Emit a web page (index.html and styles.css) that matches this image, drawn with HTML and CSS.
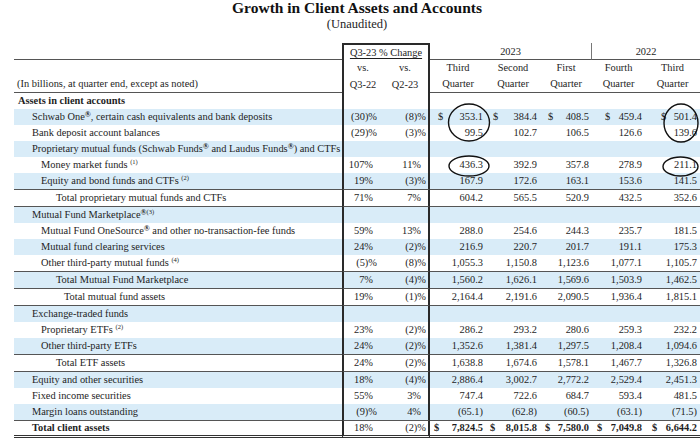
FILE: index.html
```html
<!DOCTYPE html>
<html lang="en">
<head>
<meta charset="utf-8">
<title>Growth in Client Assets and Accounts</title>
<link rel="stylesheet" href="styles.css">
</head>
<body>
<div class="page">
  <h1 class="title">Growth in Client Assets and Accounts</h1>
  <div class="subtitle">(Unaudited)</div>
  <table class="fin">
    <colgroup>
      <col class="c-label"><col class="c-p"><col class="c-p">
      <col class="c-q1"><col class="c-q2"><col class="c-q3"><col class="c-q4"><col class="c-q5">
    </colgroup>
    <thead>
      <tr class="hA">
        <th class="lbl"></th>
        <th colspan="2" class="boxtop"><span class="ul">Q3-23 % Change</span></th>
        <th colspan="3" class="yr y23">2023</th>
        <th colspan="2" class="yr">2022</th>
      </tr>
      <tr class="hB">
        <th class="lbl"></th>
        <th class="p1">vs.</th><th class="p2">vs.</th>
        <th>Third</th><th>Second</th><th>First</th><th>Fourth</th><th>Third</th>
      </tr>
      <tr class="hC">
        <th class="lbl note">(In billions, at quarter end, except as noted)</th>
        <th class="p1">Q3-22</th><th class="p2">Q2-23</th>
        <th>Quarter</th><th>Quarter</th><th>Quarter</th><th>Quarter</th><th>Quarter</th>
      </tr>
    </thead>
    <tbody>
      <tr>
        <td class="l0 strong">Assets in client accounts</td>
        <td class="p1"></td><td class="p2"></td><td></td><td></td><td></td><td></td><td></td>
      </tr>
      <tr class="b">
        <td class="l1">Schwab One<sup class="reg">®</sup>, certain cash equivalents and bank deposits</td>
        <td class="p1">(30)%</td><td class="p2">(8)%</td>
        <td class="num q1"><span class="cur">$</span>353.1</td>
        <td class="num q2"><span class="cur">$</span>384.4</td>
        <td class="num q3"><span class="cur">$</span>408.5</td>
        <td class="num q4"><span class="cur">$</span>459.4</td>
        <td class="num q5"><span class="cur">$</span>501.4</td>
      </tr>
      <tr>
        <td class="l1">Bank deposit account balances</td>
        <td class="p1">(29)%</td><td class="p2">(3)%</td>
        <td class="num">99.5</td><td class="num">102.7</td><td class="num">106.5</td><td class="num">126.6</td><td class="num">139.6</td>
      </tr>
      <tr class="b">
        <td class="l1">Proprietary mutual funds (Schwab Funds<sup class="reg">®</sup> and Laudus Funds<sup class="reg">®</sup>) and CTFs</td>
        <td class="p1"></td><td class="p2"></td><td></td><td></td><td></td><td></td><td></td>
      </tr>
      <tr>
        <td class="l2">Money market funds <sup>(1)</sup></td>
        <td class="p1 pos">107%</td><td class="p2 pos">11%</td>
        <td class="num">436.3</td><td class="num">392.9</td><td class="num">357.8</td><td class="num">278.9</td><td class="num">211.1</td>
      </tr>
      <tr class="b">
        <td class="l2">Equity and bond funds and CTFs <sup>(2)</sup></td>
        <td class="p1 pos">19%</td><td class="p2">(3)%</td>
        <td class="num">167.9</td><td class="num">172.6</td><td class="num">163.1</td><td class="num">153.6</td><td class="num">141.5</td>
      </tr>
      <tr class="sep">
        <td class="l3">Total proprietary mutual funds and CTFs</td>
        <td class="p1 pos">71%</td><td class="p2 pos">7%</td>
        <td class="num">604.2</td><td class="num">565.5</td><td class="num">520.9</td><td class="num">432.5</td><td class="num">352.6</td>
      </tr>
      <tr class="b sep">
        <td class="l1">Mutual Fund Marketplace<sup class="reg">®</sup><sup>(3)</sup></td>
        <td class="p1"></td><td class="p2"></td><td></td><td></td><td></td><td></td><td></td>
      </tr>
      <tr>
        <td class="l2">Mutual Fund OneSource<sup class="reg">®</sup> and other no-transaction-fee funds</td>
        <td class="p1 pos">59%</td><td class="p2 pos">13%</td>
        <td class="num">288.0</td><td class="num">254.6</td><td class="num">244.3</td><td class="num">235.7</td><td class="num">181.5</td>
      </tr>
      <tr class="b">
        <td class="l2">Mutual fund clearing services</td>
        <td class="p1 pos">24%</td><td class="p2">(2)%</td>
        <td class="num">216.9</td><td class="num">220.7</td><td class="num">201.7</td><td class="num">191.1</td><td class="num">175.3</td>
      </tr>
      <tr>
        <td class="l2">Other third-party mutual funds <sup>(4)</sup></td>
        <td class="p1">(5)%</td><td class="p2">(8)%</td>
        <td class="num">1,055.3</td><td class="num">1,150.8</td><td class="num">1,123.6</td><td class="num">1,077.1</td><td class="num">1,105.7</td>
      </tr>
      <tr class="b sep">
        <td class="l3">Total Mutual Fund Marketplace</td>
        <td class="p1 pos">7%</td><td class="p2">(4)%</td>
        <td class="num">1,560.2</td><td class="num">1,626.1</td><td class="num">1,569.6</td><td class="num">1,503.9</td><td class="num">1,462.5</td>
      </tr>
      <tr class="sep">
        <td class="l4">Total mutual fund assets</td>
        <td class="p1 pos">19%</td><td class="p2">(1)%</td>
        <td class="num">2,164.4</td><td class="num">2,191.6</td><td class="num">2,090.5</td><td class="num">1,936.4</td><td class="num">1,815.1</td>
      </tr>
      <tr class="b sep">
        <td class="l1">Exchange-traded funds</td>
        <td class="p1"></td><td class="p2"></td><td></td><td></td><td></td><td></td><td></td>
      </tr>
      <tr>
        <td class="l2">Proprietary ETFs <sup>(2)</sup></td>
        <td class="p1 pos">23%</td><td class="p2">(2)%</td>
        <td class="num">286.2</td><td class="num">293.2</td><td class="num">280.6</td><td class="num">259.3</td><td class="num">232.2</td>
      </tr>
      <tr class="b">
        <td class="l2">Other third-party ETFs</td>
        <td class="p1 pos">24%</td><td class="p2">(2)%</td>
        <td class="num">1,352.6</td><td class="num">1,381.4</td><td class="num">1,297.5</td><td class="num">1,208.4</td><td class="num">1,094.6</td>
      </tr>
      <tr class="sep">
        <td class="l3">Total ETF assets</td>
        <td class="p1 pos">24%</td><td class="p2">(2)%</td>
        <td class="num">1,638.8</td><td class="num">1,674.6</td><td class="num">1,578.1</td><td class="num">1,467.7</td><td class="num">1,326.8</td>
      </tr>
      <tr class="b sep">
        <td class="l1">Equity and other securities</td>
        <td class="p1 pos">18%</td><td class="p2">(4)%</td>
        <td class="num">2,886.4</td><td class="num">3,002.7</td><td class="num">2,772.2</td><td class="num">2,529.4</td><td class="num">2,451.3</td>
      </tr>
      <tr>
        <td class="l1">Fixed income securities</td>
        <td class="p1 pos">55%</td><td class="p2 pos">3%</td>
        <td class="num">747.4</td><td class="num">722.6</td><td class="num">684.7</td><td class="num">593.4</td><td class="num">481.5</td>
      </tr>
      <tr class="b">
        <td class="l1">Margin loans outstanding</td>
        <td class="p1">(9)%</td><td class="p2 pos">4%</td>
        <td class="num">(65.1)</td><td class="num">(62.8)</td><td class="num">(60.5)</td><td class="num">(63.1)</td><td class="num">(71.5)</td>
      </tr>
      <tr class="sep total">
        <td class="l1 strong">Total client assets</td>
        <td class="p1 pos">18%</td><td class="p2">(2)%</td>
        <td class="num q1 strong"><span class="cur">$</span>7,824.5</td>
        <td class="num q2 strong"><span class="cur">$</span>8,015.8</td>
        <td class="num q3 strong"><span class="cur">$</span>7,580.0</td>
        <td class="num q4 strong"><span class="cur">$</span>7,049.8</td>
        <td class="num q5 strong"><span class="cur">$</span>6,644.2</td>
      </tr>
    </tbody>
  </table>
  <svg class="marks" width="700" height="438" viewBox="0 0 700 438" aria-hidden="true">
    <ellipse cx="469" cy="122.5" rx="20.5" ry="18.5"/>
    <ellipse cx="681" cy="123" rx="17" ry="19"/>
    <ellipse cx="469" cy="166" rx="20" ry="10"/>
    <ellipse cx="680.5" cy="166.5" rx="17.5" ry="9.5"/>
  </svg>
</div>
</body>
</html>
```
FILE: styles.css
```css
html, body {
  margin: 0;
  padding: 0;
  background: #ffffff;
}

body {
  font-family: "Liberation Serif", "Times New Roman", serif;
  color: #1e1e1e;
}

.page {
  position: relative;
  width: 686px;
  height: 438px;
  padding-left: 14px;
  overflow: hidden;
}

.title {
  margin: 0;
  font-size: 15.5px;
  line-height: 16px;
  font-weight: bold;
  text-align: center;
  color: #111;
}

.subtitle {
  margin-top: 1px;
  font-size: 12.5px;
  line-height: 15px;
  text-align: center;
}

.fin {
  margin-top: 11px;
  width: 686px;
  table-layout: fixed;
  border-collapse: separate;
  border-spacing: 0;
  font-size: 10.4px;
}

.c-label { width: 328px; }
.c-p { width: 44px; }
.c-q1 { width: 56px; }
.c-q2 { width: 54px; }
.c-q3 { width: 52px; }
.c-q4 { width: 53px; }
.c-q5 { width: 55px; }

.fin th,
.fin td {
  padding: 0;
  line-height: 16px;
  font-weight: normal;
  white-space: nowrap;
}

.fin th {
  text-align: center;
}

/* header row A */
.hA th {
  line-height: 15px;
  padding-top: 1px;
  border-bottom: 1px solid #555;
}
.hA th.boxtop {
  padding-top: 0;
  border: 2px solid #2a2a2a;
  border-bottom: 0;
}
.hA th.y23 {
  border-right: 1px solid #777;
}
.ul {
  text-decoration: underline;
  text-underline-offset: 2px;
}

.hC th {
  border-bottom: 1px solid #555;
}
.hC th.p1,
.hC th.p2 {
  border-bottom: 0;
}
.fin th.note {
  text-align: left;
  padding-left: 3px;
}

/* box around % change columns */
.fin .p1 {
  border-left: 2px solid #2a2a2a;
}
.fin .p2 {
  border-right: 2px solid #2a2a2a;
}
.fin th.p1 { padding-right: 4px; }
.fin th.p2 { padding-right: 4px; }

.fin td.p1 {
  text-align: right;
  padding-right: 9px;
}
.fin td.p1.pos { padding-right: 13px; }
.fin td.p2 {
  text-align: right;
  padding-right: 2px;
}
.fin td.p2.pos { padding-right: 7px; }

/* body rows */
.fin tbody tr.b td {
  background: #d9ecf8;
}
.fin tbody tr.sep td {
  border-top: 1px solid #555;
}

.l0 { padding-left: 4px !important; }
.l1 { padding-left: 18px !important; }
.l2 { padding-left: 27px !important; }
.l3 { padding-left: 42px !important; }
.l4 { padding-left: 50px !important; }

.strong {
  font-weight: bold !important;
}

.num {
  text-align: right;
  padding-right: 3px !important;
}
.cur {
  float: left;
}
.q1 .cur { margin-left: 8px; }
.q2 .cur { margin-left: 7px; }
.q3 .cur { margin-left: 8px; }
.q4 .cur { margin-left: 13px; }
.q5 .cur { margin-left: 16px; }

.total td {
  line-height: 14px;
  border-bottom: 3px double #333;
}
.total .q1 .cur { margin-left: 4px; }
.total .q2 .cur { margin-left: 4px; }
.total .q3 .cur { margin-left: 5px; }
.total .q4 .cur { margin-left: 5px; }
.total .q5 .cur { margin-left: 7px; }

sup {
  font-size: 6.5px;
  line-height: 0;
  vertical-align: 4px;
}
sup.reg {
  font-size: 8px;
  font-weight: bold;
  vertical-align: 3px;
}

.marks {
  position: absolute;
  top: 0;
  left: 0;
  pointer-events: none;
}
.marks ellipse {
  fill: none;
  stroke: #111;
  stroke-width: 1.4;
}
```
